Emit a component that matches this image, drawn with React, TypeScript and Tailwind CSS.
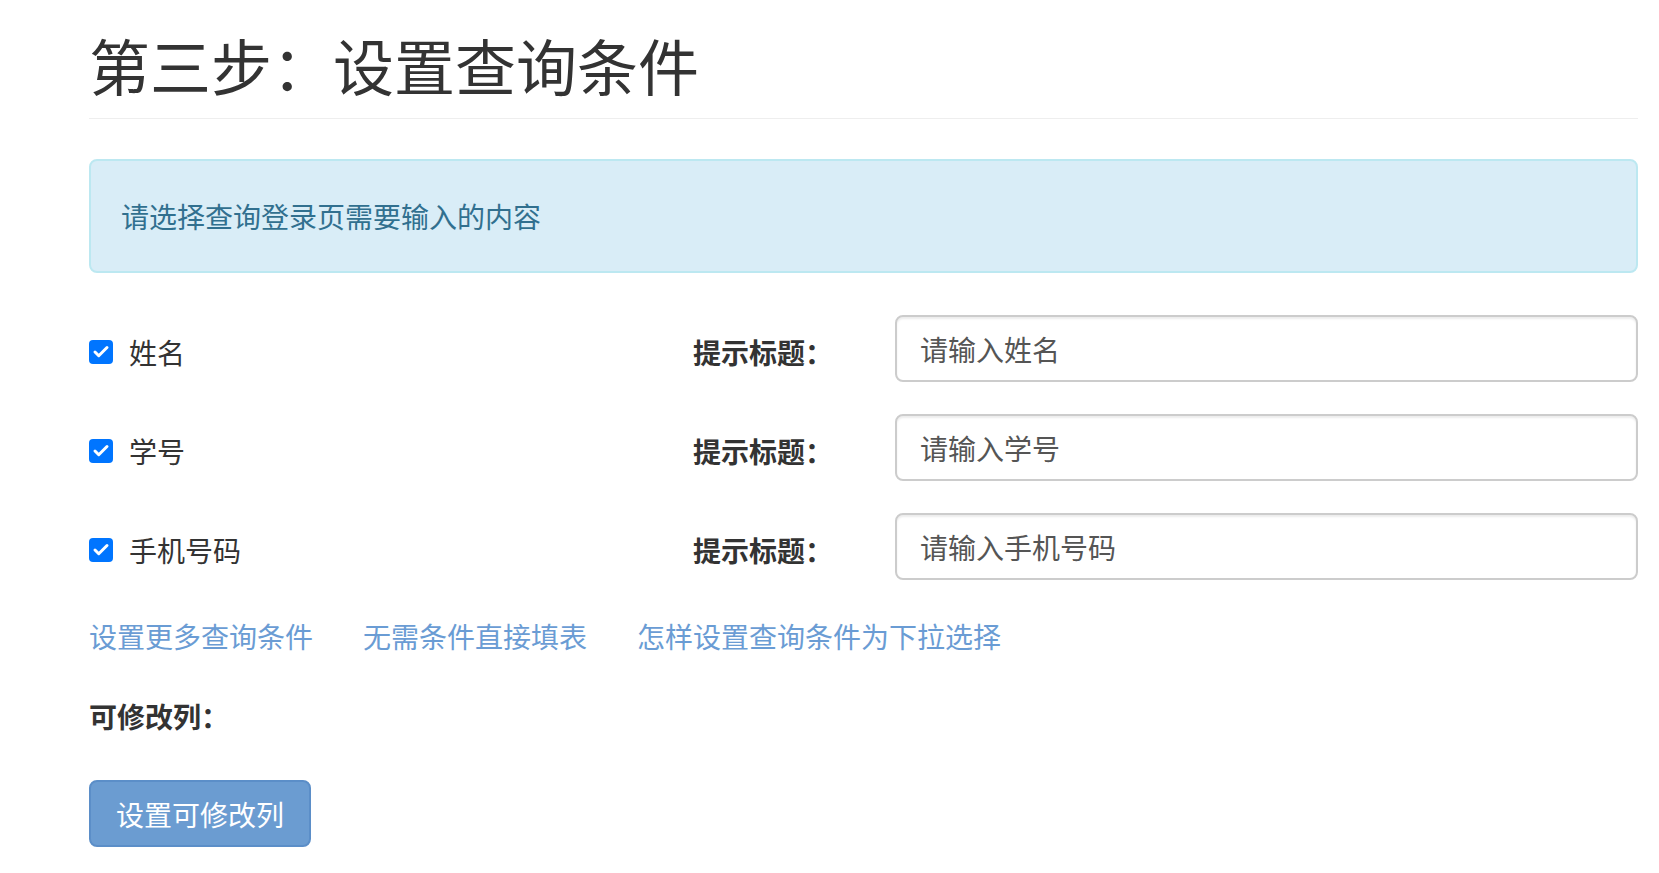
import { Check } from 'lucide-react';

const fields = [
  { name: '姓名', placeholder: '请输入姓名' },
  { name: '学号', placeholder: '请输入学号' },
  { name: '手机号码', placeholder: '请输入手机号码' },
];

const links = ['设置更多查询条件', '无需条件直接填表', '怎样设置查询条件为下拉选择'];

function FieldRow({ name, placeholder }: { name: string; placeholder: string }) {
  return (
    <div className="flex items-center h-[67px]">
      <div className="w-[604px] flex items-center mt-[7px]">
        <span className="w-6 h-6 rounded-[4px] bg-[#0075ff] flex items-center justify-center">
          <Check className="w-[18px] h-[18px] text-white" strokeWidth={4} />
        </span>
        <span className="ml-[16px] text-[28px] leading-[40px] text-[#333]">{name}</span>
      </div>
      <div className="w-[202px] mt-[7px] text-[28px] leading-[40px] font-bold text-[#333]">提示标题：</div>
      <div className="flex-1 h-full">
        <input
          type="text"
          defaultValue={placeholder}
          className="w-full h-full px-[23px] text-[28px] text-[#555] border-2 border-[#ccc] rounded-[8px] shadow-[inset_0_2px_2px_rgba(0,0,0,0.075)] outline-none bg-white"
        />
      </div>
    </div>
  );
}

export default function App() {
  return (
    <div
      className="min-h-screen bg-white pl-[89px] pr-[21px] text-[#333]"
      style={{ fontFamily: '"Noto Sans CJK SC", "Noto Sans", sans-serif' }}
    >
      <div className="pt-[31px] pb-[20px] border-b border-[#eee]">
        <h1 className="text-[61px] leading-[67px] font-normal text-[#333]">第三步：设置查询条件</h1>
      </div>

      <div className="mt-[40px] h-[114px] flex items-center px-[30px] bg-[#d9edf7] border-2 border-[#bce8f1] rounded-[8px]">
        <span className="text-[28px] leading-[40px] text-[#31708f]">请选择查询登录页需要输入的内容</span>
      </div>

      <div className="mt-[42px] flex flex-col gap-[32px]">
        {fields.map(f => (
          <FieldRow key={f.name} name={f.name} placeholder={f.placeholder} />
        ))}
      </div>

      <div className="mt-[36px] flex gap-[50px] text-[28px] leading-[40px] text-[#6a9cd4]">
        {links.map(l => (
          <a key={l} href="#" className="hover:underline">{l}</a>
        ))}
      </div>

      <div className="mt-[40px] text-[28px] leading-[40px] font-bold text-[#333]">可修改列：</div>

      <button className="mt-[44px] h-[67px] w-[222px] bg-[#6b9cd1] border-2 border-[#5b8ec8] rounded-[8px] text-white text-[28px] leading-[40px]">
        设置可修改列
      </button>
    </div>
  );
}
